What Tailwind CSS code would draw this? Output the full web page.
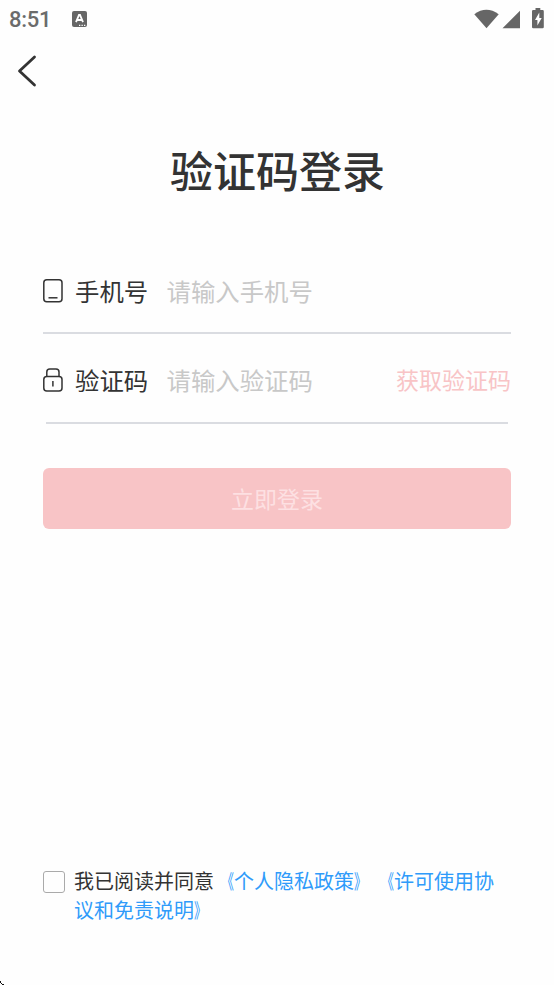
<!DOCTYPE html>
<html lang="zh-CN">
<head>
<meta charset="utf-8">
<meta name="viewport" content="width=device-width, initial-scale=1">
<title>验证码登录</title>
<script src="https://cdn.jsdelivr.net/npm/@tailwindcss/browser@4"></script>
</head>
<body class="bg-[#fefefe] font-['Noto_Sans_CJK_SC',sans-serif] text-[#333]">
<div class="relative flex h-[985px] w-[554px] flex-col overflow-hidden">
  <header class="flex h-[38px] shrink-0 items-center justify-between pl-[9px] pr-[10px] text-[#6b6b6b]">
    <div class="flex items-center">
      <span class="w-[63px] pt-0.5 font-[Roboto,sans-serif] text-[22px] font-medium leading-[38px] tracking-[-0.3px]">8:51</span>
      <svg class="h-4 w-[15px]" viewBox="0 0 15 16"><rect width="15" height="16" rx="2" fill="#666"/><path d="M4 11.2 7 4h1l3 7.2M5 9h5" fill="none" stroke="#fff" stroke-width="1.8"/><path d="M7 14.3h1.3M9.5 14.3h1.3M12 14.3h1.3" stroke="#fff" stroke-width="1.2"/></svg>
    </div>
    <svg class="h-[22px] w-[70px]" viewBox="0 0 70 22" fill="#666">
      <path d="M.3 6.2Q12.3-2.6 24.700 6.2L12.5 20.2Z"/>
      <path d="M28.5 20.2 46 2.8v17.4Z"/>
      <path d="M59.2 2h2.3V0h4.800v2h2.3q1.2 0 1.2 1.2V19q0 1.2-1.2 1.2h-9.4q-1.2 0-1.2-1.2V3.200q0-1.200 1.200-1.200Z"/>
      <path d="M65.300 4.500 61 12h2.400v5.500L67.700 10h-2.400Z" fill="#fff"/>
    </svg>
  </header>

  <nav class="flex h-[66px] shrink-0 items-center pl-[17px]">
    <svg class="h-8 w-5" viewBox="0 0 20 32" fill="none" stroke="#333" stroke-width="2.8" stroke-linecap="round" stroke-linejoin="round"><path d="M17.500 2 2.500 16l15 14"/></svg>
  </nav>

  <main class="flex grow flex-col px-[43px]">
    <h1 class="mt-[34px] pl-px text-center text-[43px] font-medium leading-[62px]">验证码登录</h1>

    <div class="mt-[48px] flex h-[86px] items-center border-b-2 border-[#dadce1] pt-0.5 text-[24.400px]">
      <svg class="h-6 w-5 shrink-0" viewBox="0 0 20 24" fill="none" stroke="#333" stroke-width="1.500"><rect x=".8" y=".8" width="18.200" height="22" rx="3"/><path d="M5.500 18.800h9"/></svg>
      <span class="ml-3 w-[92px]">手机号</span>
      <span class="-ml-[0.5px] text-[#c8c8c8]">请输入手机号</span>
    </div>

    <div class="flex h-[88px] items-center pt-1 text-[24.400px]">
      <svg class="h-6 w-5 shrink-0" viewBox="0 0 20 24" fill="none" stroke="#333" stroke-width="1.500"><rect x=".8" y="8.500" width="18.200" height="14.500" rx="3"/><path d="M3.800 8.500V4q0-3 3-3h6.200q3 0 3 3v4.500M9.900 13v5.500"/></svg>
      <span class="ml-3 w-[92px]">验证码</span>
      <span class="-ml-[0.5px] text-[#c8c8c8]">请输入验证码</span>
      <span class="ml-auto pb-0.5 text-[23px] text-[#f8c4c6]">获取验证码</span>
    </div>
    <div class="mx-[3px] h-0.5 bg-[#dadce1]"></div>

    <button class="mt-[44px] h-[61px] shrink-0 rounded-[6px] bg-[#f8c4c6] text-[23px] text-[#fde0e2]">立即登录</button>

    <div class="mt-auto mb-[61px] flex text-[20px] leading-[29px]">
      <span class="mt-[5px] h-[22px] w-[22px] shrink-0 rounded-[3px] border border-[#aaa]"></span>
      <p class="ml-[9px] w-[430px] [text-spacing-trim:space-all]">我已阅读并同意<span class="text-[#2f9bfa]"><span class="inline-block origin-right scale-x-[.62]">《</span>个人隐私政策<span class="inline-block origin-left scale-x-[.62]">》</span><span class="inline-block origin-right scale-x-[.62]">《</span>许可使用协<br>议和免责说明<span class="inline-block origin-left scale-x-[.62]">》</span></span></p>
    </div>
  </main>
  <svg class="absolute bottom-0 left-0 h-[5px] w-[5px]" viewBox="0 0 5 5"><path d="M0 1h1v1H0zM0 2h1v1H0zM1 3h1v1H1zM2 4h2v1H2z" fill="#111"/></svg>
</div>
</body>
</html>
